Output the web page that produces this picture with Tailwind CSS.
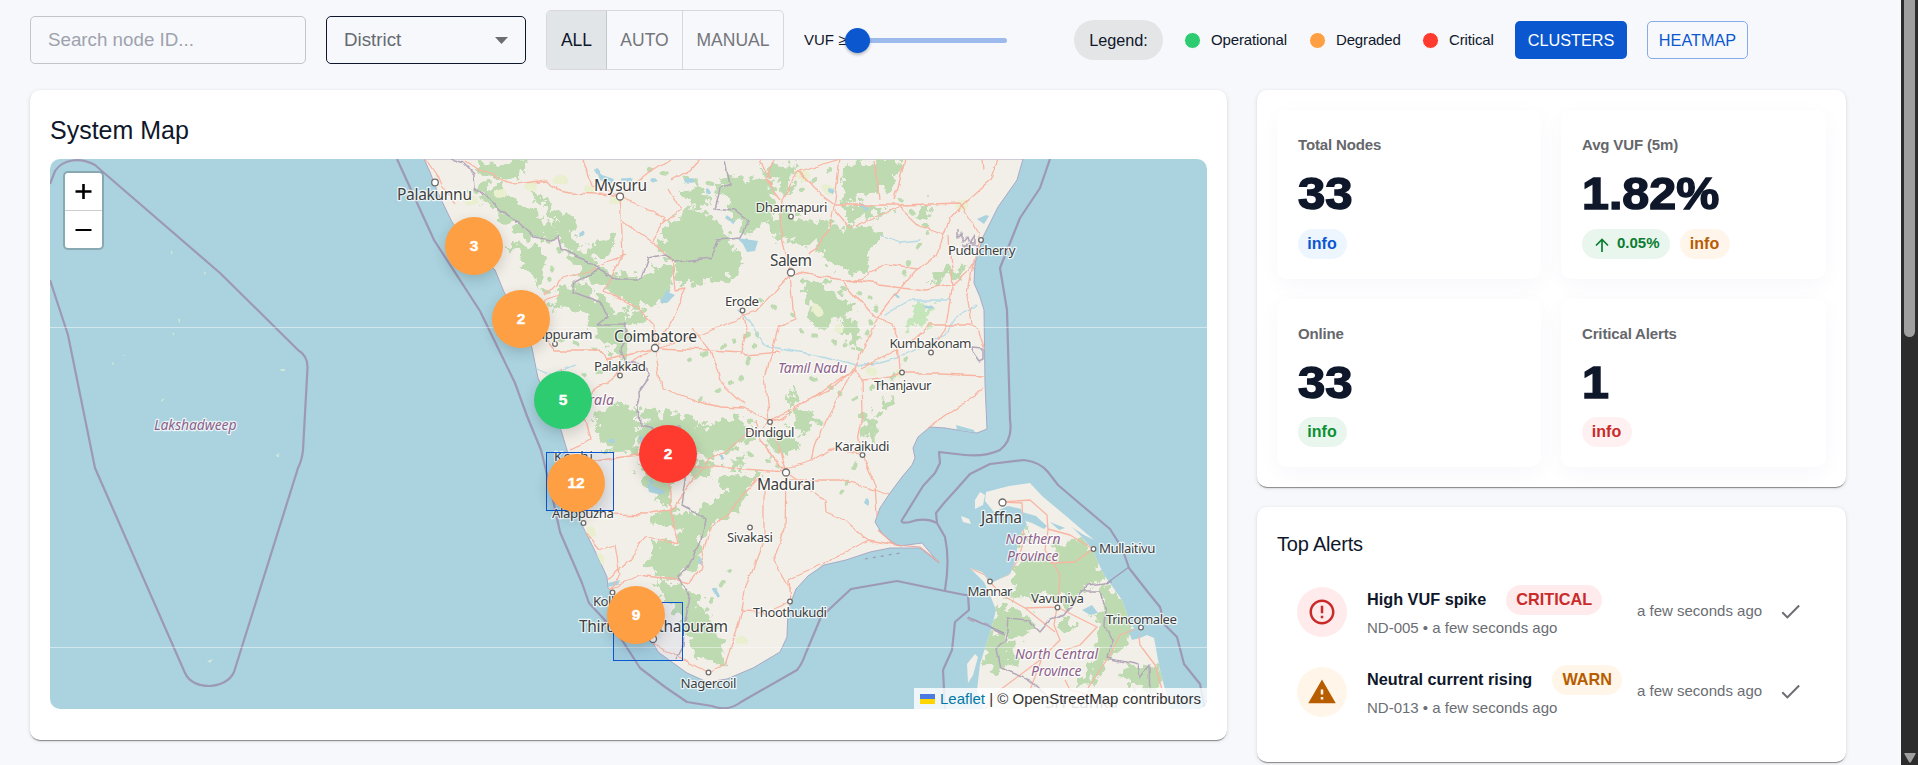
<!DOCTYPE html>
<html lang="en">
<head>
<meta charset="utf-8">
<title>System Map</title>
<script src="https://cdn.jsdelivr.net/npm/@tailwindcss/browser@4"></script>
</head>
<body class="h-[765px] w-[1918px] overflow-hidden bg-[#f7f8fc] font-['Liberation_Sans',Arial,sans-serif] text-[#0f172a]">
<div class="flex h-[765px]">
<main class="h-[765px] w-[1901px] overflow-hidden pl-[30px]">
  <!-- Toolbar -->
  <div class="flex h-20 items-center">
    <div class="flex h-12 w-[276px] items-center rounded-[5px] border border-[#c2c4c9] pl-[17px] text-[18.75px] text-[#9ea2ac]">Search node ID...</div>
    <div class="ml-5 flex h-12 w-[200px] items-center justify-between rounded-[5px] border border-[#0f172a] pr-[17px] pl-[17px] text-[18.75px] text-[#666a70]">
      <span class="pt-px">District</span>
      <svg class="h-[7px] w-[13px]" viewBox="0 0 13 7"><path d="M0 0h13L6.5 7z" fill="#6b6d71"/></svg>
    </div>
    <div class="ml-5 flex h-[60px] w-[238px] overflow-hidden rounded-[5px] border border-[#d6d8dc] text-[17.5px] text-[#74767a]">
      <div class="flex w-[60px] items-center justify-center border-r border-[#c6c8cc] bg-[#e2e5e8] text-[#0f172a]">ALL</div>
      <div class="flex w-[76px] items-center justify-center border-r border-[#d6d8dc]">AUTO</div>
      <div class="flex flex-1 items-center justify-center">MANUAL</div>
    </div>
    <div class="ml-5 flex w-[53px] items-center text-[15px] whitespace-nowrap">VUF ≥</div>
    <div class="relative h-[5px] w-[150px] rounded-full bg-[#9dbaec]">
      <div class="absolute -top-[10px] -left-[12px] size-[25px] rounded-full bg-[#0b57d0] shadow-[0_2px_3px_rgba(0,0,0,0.25)]"></div>
    </div>
    <div class="ml-[67px] flex h-10 w-[89px] items-center justify-center rounded-full bg-[#e3e5e7] text-[16.25px]">Legend:</div>
    <div class="ml-5 flex items-center text-[15px] tracking-[-0.01em]">
      <span class="mr-[10px] ml-px size-[17px] rounded-full border-[1.5px] border-white bg-[#2ecc71]"></span><span class="w-[77px]">Operational</span>
      <span class="mr-[10px] ml-[21px] size-[17px] rounded-full border-[1.5px] border-white bg-[#ff9f43]"></span><span class="w-[66px]">Degraded</span>
      <span class="mr-[10px] ml-5 size-[17px] rounded-full border-[1.5px] border-white bg-[#ff3b30]"></span><span class="w-[46px]">Critical</span>
    </div>
    <div class="ml-5 flex h-[38px] w-28 items-center justify-center rounded-[5px] bg-[#0b57d0] text-[16.25px] text-white">CLUSTERS</div>
    <div class="ml-5 flex h-[38px] w-[101px] items-center justify-center rounded-[5px] border border-[#85abe8] text-[16.25px] text-[#0b57d0]">HEATMAP</div>
  </div>

  <div class="mt-[10px] flex items-start gap-[30px]">
    <!-- Map card -->
    <section class="h-[650px] w-[1197px] rounded-[10px] bg-white px-5 shadow-[0_2px_1px_-1px_rgba(0,0,0,0.3),0_1px_1px_rgba(0,0,0,0.15),0_1px_4px_rgba(0,0,0,0.12)]">
      <h2 class="h-[69px] pt-[24px] text-[25px] leading-[32px]">System Map</h2>
      <div class="relative h-[550px] w-[1157px] overflow-hidden rounded-[10px] bg-[#aad3df]">
        <svg class="block h-[550px] w-[1157px]" viewBox="50 159 1157 550" font-family="'Noto Sans','Open Sans',sans-serif">
          <defs>
            <filter id="rough" x="-5%" y="-5%" width="110%" height="110%">
              <feTurbulence type="fractalNoise" baseFrequency="0.035" numOctaves="4" seed="7" result="n"/>
              <feDisplacementMap in="SourceGraphic" in2="n" scale="75" xChannelSelector="R" yChannelSelector="G"/>
            </filter>
            <filter id="wobble" x="-5%" y="-5%" width="110%" height="110%">
              <feTurbulence type="fractalNoise" baseFrequency="0.05" numOctaves="3" seed="3" result="n"/>
              <feDisplacementMap in="SourceGraphic" in2="n" scale="7" xChannelSelector="R" yChannelSelector="G"/>
            </filter>
            <clipPath id="mainland"><path id="coast" d="M424 159L430 172L438 193L452 222L470 246L495 270L504 292L520 320L532 348L538 378L548 400L560 427L567 450L572 477L582 525L597 555L607 577L608 588L615 595L634 618L653 643L658 652L687 673L707 682L727 679L753 668L780 652L787 637L788 610L796 589L808 576L824 565L846 560L870 552L890 548L920 548L939 563L922 543L900 546L890 541L881 532L875 522L880 508L890 493L902 477L912 465L915 458L913 448L918 437L930 427L945 428L957 430L977 433L987 429L985 383L984 310L980 297L974 283L975 263L983 237L998 207L1017 180L1023 159Z"/></clipPath>
            <clipPath id="lanka"><path id="isle" d="M1030 483L1009 486L986 492L985 501L994 512L1008 506L1021 509L1027 525L1018 537L1016 560L1010 574L991 583L982 572L970 568L984 582L990 595L996 610L991 630L986 645L980 664L977 690L984 709L1170 709L1160 670L1154 638L1147 635L1140 638L1130 622L1122 600L1112 586L1104 575L1097 560L1093 550L1080 535L1065 520L1045 505Z"/></clipPath>
          </defs>

          <!-- Land -->
          <g fill="#f2efe9" stroke="#a9a9c4" stroke-width="1"><use href="#coast"/><use href="#isle" stroke="none"/></g>
          <g fill="#f2efe9">
            <path d="M961 516l8 3 2 5-8-2zM975 500l5-8 5 3-2 10-8 4zM967 664l8-10 3 3-5 18-5 8z"/>
            <path d="M1031 484l11 12 24 20 28 24-10-5-28-18-20-15z"/>
          </g>

          <!-- Forest -->
          <g clip-path="url(#mainland)" fill="#bddab1">
            <g transform="translate(380 150) scale(.3333)"><g filter="url(#rough)">
              <path d="M280 60L420 20L450 60L370 95zM290 100L360 110L430 165L520 230L545 270L440 260L350 190L300 130zM440 105L490 135L520 180L585 190L580 270L640 330L560 310L525 230L490 165zM380 275L470 290L500 330L480 420L430 340zM590 300L700 260L690 320L630 330zM560 280L640 340L700 370L790 380L690 420L600 380zM590 395L640 420L700 480L750 520L740 620L690 600L620 520L600 470L510 480L530 420zM700 390L790 380L850 340L880 370L870 450L780 475L720 440L680 420zM870 210L940 170L1000 200L1050 270L1090 330L1070 380L900 410L880 330L830 300zM900 120L970 110L990 160L930 170zM1010 90L1100 70L1180 110L1170 210L1100 260L1050 180zM1140 50L1240 40L1250 80L1160 90zM1150 200L1250 190L1260 240L1190 270zM730 480L810 490L780 530L740 540zM640 780L760 760L780 830L720 890L660 840zM790 780L930 800L960 830L1080 800L1120 840L1070 900L780 880z"/>
            </g></g>
            <g transform="translate(780 150) scale(.3333)"><g filter="url(#rough)">
              <path d="M190 40L370 30L330 110L230 140L180 170zM190 170L260 160L340 180L200 220zM140 220L300 240L270 310L260 370L160 350L100 290L10 270L50 210zM60 380L120 390L200 450L240 470L190 500L130 530L90 520L80 440zM0 80L40 90L30 130L0 120zM180 500L240 510L230 590L190 570zM455 370L550 345L550 375L450 400zM420 160L460 160L440 220L410 200zM20 720L60 740L40 780L30 750zM30 790L100 790L110 830L60 860L30 830zM0 870L60 880L50 900L0 900zM250 790L290 800L290 880L260 860zM330 720L350 730L320 780L300 780z"/>
              <path fill="#c5e6bb" d="M400 470L465 460L440 520L390 540z"/>
            </g></g>
            <g transform="translate(500 430) scale(.3333)"><g filter="url(#rough)">
              <path d="M280 0L420 0L410 70L330 60zM410 90L520 150L500 230L440 170zM530 60L600 100L650 110L640 140L560 130zM650 140L780 130L740 180L720 250L650 270L600 320L600 400L560 430L490 450L440 400L460 340L530 330L540 290L460 290L450 260L540 240L600 240L680 190zM460 450L560 470L620 550L670 640L670 710L600 680L560 610L520 540zM700 80L740 80L740 110L700 110zM800 20L880 20L890 60L810 70zM580 20L680 20L640 90L590 80z"/>
            </g></g>
          </g>
          <g clip-path="url(#lanka)" fill="#bddab1">
            <g transform="translate(840 440) scale(.3333)"><g filter="url(#rough)">
              <path d="M520 370L650 350L740 300L770 350L790 410L740 440L700 500L640 460L590 470L510 480zM640 310L720 300L740 350L640 360zM510 260L560 260L560 310L530 300zM480 500L580 530L560 590L500 590L540 660L470 690L430 660L450 580zM790 440L830 450L890 540L870 600L800 670L750 740L700 740L760 660L780 590zM660 540L700 540L690 590L660 570zM860 670L970 680L960 760L850 730zM760 540L800 530L800 560z"/>
            </g></g>
          </g>

          <!-- Sparse woodland specks, farmland tint and water -->
          <g clip-path="url(#mainland)">
            <g filter="url(#wobble)" fill="none" stroke-linecap="round">
              <path stroke="#bddab1" stroke-width="4" stroke-dasharray="1 13 4 17 2 9" d="M470 190L560 250L545 290L640 320M650 170L740 190M690 360L760 330L740 380L700 400M800 190L830 170M800 330L860 350L880 300L820 280M800 370L850 400L890 380L905 360M860 450L850 480L835 500M900 200L930 230L900 280M730 570L700 620L720 650M690 440L740 450L790 470M560 340L600 350M540 390L600 370M760 300L800 320"/>
              <path stroke="#e9efcf" stroke-width="9" stroke-dasharray="4 26" d="M470 200L560 180L620 200M800 175L830 190M815 310L840 330M870 370L900 374M590 530L600 560M960 205L980 200M740 640L760 650"/>
              <path stroke="#aad3df" stroke-width="3.5" stroke-dasharray="3 30 7 22" d="M595 170L602 180L700 180L745 240L755 250M580 235L590 230M662 300L670 290M545 385L560 365M610 440L640 435L660 490M830 190L870 210M895 295L905 300L945 310M720 455L725 460M650 480L665 490M700 560L720 600M867 500L869 520"/>
              <path stroke="#b7dbe5" stroke-width="1.3" d="M740 310L755 330L765 345L785 350L805 353L830 358L855 365L880 362L905 355L925 345L945 335L955 318L975 305M535 368L550 375L575 365M880 235L900 242L920 240M885 315L910 300L950 300"/>
            </g>
            <path fill="#aad3df" d="M977 219l9-4 3 1-5 8zM737 238l21 3-3 10-8 1-4-8zM660 303l7-14 3 4 5 2-8 8zM647 483l18 8-3 4-13-3zM608 583l12-3-2 5-10 2zM956 425l18 5 1 3-18-3zM596 169l6 6 12 4-3 5-11-4z"/>
          </g>
          <path fill="#aad3df" d="M1022 512l14 4 11 10-3 3-12-6-9-3zM1050 522l15 6-6 2zM1082 610l10-5 6 8-8 2zM1128 630l8-2 4 10-8 2z"/>

          <!-- Roads -->
          <g clip-path="url(#mainland)" fill="none" stroke="#f8b5a2" stroke-width="1.3" stroke-linejoin="round">
            <g filter="url(#wobble)">
              <path d="M426 159L440 180L455 205M465 162L480 172L515 184L548 180L557 190L570 193L620 195L650 172L670 159M583 159L592 185L620 195L623 255L603 290L640 310L655 325L655 348L700 335L755 312L791 274L795 320L780 326L765 377L770 422L786 472L785 530L773 561L790 590M622 220L650 240L672 258L675 290L687 288L668 325L655 348L661 388L700 402L720 407L745 408L770 422M620 197L645 207L665 218L652 240M668 188L680 210L660 225M700 159L690 170L672 180M625 255L592 270L560 280L545 295M560 295L545 300L540 330L555 350L600 350L608 360L655 348M655 348L635 360L610 380L590 395L580 410M692 328L710 350L720 380L745 405M655 348L710 350L740 352L745 355L780 352M742 310L747 330L740 355M791 272L800 273L843 280L860 280L885 265L918 269L910 275L878 317L860 355L854 368L818 395L780 420L770 422M848 280L925 290L955 284L968 272L975 260M843 280L860 300L875 317L890 322L898 340L900 370M860 368L910 343L930 325L968 325L978 330L985 350M854 368L862 380L880 378L900 374L940 374L984 376M862 380L863 415L858 440L862 455L875 485L878 527L900 547M984 388L945 415L925 430M791 272L780 230L782 200L798 172L840 159L835 200L830 230L810 255M798 172L815 190L835 205L885 205L898 205L920 226L944 235L950 218L962 205L990 180L998 159M898 205L960 203L980 235L972 270L967 300L970 325M944 235L935 255L918 269M949 235L952 290L945 330L931 350M895 200L905 159M835 210L850 228L898 207M854 368L830 390L800 405L770 422L755 435M780 470L812 460L830 450L862 455M786 473L825 500L826 512L845 520L862 535L870 540M788 480L840 480L875 490L890 495M854 368L820 430L812 460M786 472L700 466L665 460L640 455L615 458L570 465M786 472L760 440L755 420M760 476L730 510L710 530L700 570L690 583L678 580L640 575L605 590M765 480L765 540L745 590L742 612L725 665L708 672M607 514L645 515L672 510L675 530L678 544L660 540L645 535L630 560L608 580M572 450L590 440L585 420L570 400L560 370M583 530L600 550L615 545L620 575L608 592M653 643L665 652L690 661L708 672M742 612L765 613L790 602L788 580L797 575L820 565M672 510L690 485L705 462L740 440L753 430M650 455L672 490L672 510M900 546L870 540L840 553L820 568M983 159L984 170M875 159L880 200M780 200L765 180L774 159M760 159L770 180"/>
            </g>
          </g>
          <g clip-path="url(#lanka)" fill="none" stroke="#f8b5a2" stroke-width="1.3" stroke-linejoin="round">
            <path d="M1002 502L1022 503L1024 540L1018 560L1008 575L990 582M1002 502L1030 500L1047 515L1048 530L1045 550L1053 563L1060 575L1059 592L1057 607L1054 625L1060 640L1040 660L1020 675L1000 690L985 709M970 568L985 575L990 582L1002 595L1025 608L1057 607L1075 616L1097 627L1080 645L1065 650M1048 529L1070 535L1093 549L1075 562L1050 563M1141 627L1120 635L1110 655L1088 688M1138 630L1140 645L1155 665L1165 700M1025 608L1055 632M1045 650L1030 690M1065 680L1070 690L1090 695"/>
          </g>
          <path d="M878 530L895 545L920 547L939 562" fill="none" stroke="#e9a99f" stroke-width="1.2"/>

          <!-- State borders -->
          <g fill="none" stroke="#b3a6b8" stroke-width="1.5" stroke-linejoin="round" filter="url(#wobble)">
            <path d="M451 159L463 163L474 174L475 187L500 210L520 223L535 237L550 240L558 237L561 249L575 256L590 262L598 270L615 279L641 279L648 258L667 254L675 262L710 258L717 240L740 238L748 220L735 210L715 208L720 190L731 185L726 160M598 270L575 282L573 292L600 302L609 315L597 325L625 325L628 333L620 352L625 362L642 364L650 375L638 392L640 425L660 430L680 425L688 440L686 480L682 505L695 512L705 520L700 545L690 565L678 577L690 597L685 620L683 645L675 660"/>
            <path d="M958 230v8l4-4v8l5-6 2 7 5-8v8h-8l-4 8 6-2M962 245h14v8M973 348l10 1v10l-4 2-7-10z"/>
            <path d="M1112 582L1090 585L1080 595L1065 615L1050 620L1040 632L1028 620L1008 618L1006 640L997 650L1001 668L1030 680L1050 700M1080 592L1100 592L1105 610L1104 625L1112 640L1107 658L1138 665L1140 678L1150 665L1151 700M968 617L1004 633"/>
          </g>

          <!-- Maritime borders -->
          <g fill="none" stroke="#9d98b5" stroke-width="2.2" stroke-linejoin="round">
            <path d="M50 184L55 171C63 159 80 157 95 165L103 172L220 273L298 350Q308 356 307.500 368L303 450Q302 460 298 468L234 672C226 690 193 691 185 673L95 468L68 335L50 280"/>
            <path d="M397 159L434 240L480 311L515 383L527 416L541 450L552 495L560 532L582 583L589 603L602 617L622 640L640 668L665 687L687 702L712 706Q728 712 741 702L797 670Q802 664 805 655L821 617L851 589L897 581L945 591L965 595L968 595"/>
            <path d="M1050 159L1040 188L1020 218L1000 268L1007 310L1010 420Q1013 440 1000 450Q985 457 965 455L939 452L940 463L935 473L923 486L902 520Q900 524 910 522Q925 517 937 523L945 537Q950 560 945 590"/>
            <path d="M937 523L936 513L944 503L954 492L970 474L990 464L1024 460Q1040 462 1048 472L1058 485L1085 508L1110 529L1122 548L1129 568L1147 591L1160 607L1165 625L1177 637L1184 664L1200 684L1205 709M968 595L969 610L955 622L952 650L943 670L945 709"/>
            <path stroke-width="1.200" d="M968 617L1004 633M1107 583L1129 567"/>
            <path stroke-width="1.200" stroke-dasharray="3 5" d="M865 559L900 553"/>
          </g>
          <!-- Atolls -->
          <g fill="#cfe6da"><path d="M171 250l2 3-2 1zM203 271l3 2-1 2zM178 320l2-2v5zM172 333h2v3zM112 362l2 1-1 3zM280 369h5v2h-4zM161 400l4-2-3 4zM276 455l3-2v4h-2zM207 661l6-2-3 4zM122 355h3v1z"/></g>

          <!-- Tile seams -->
          <g stroke="#fff" stroke-opacity=".45" stroke-width="1"><path d="M50 327.500H1207"/><path d="M50 647.500H1207"/></g>

          <!-- Town dots -->
          <g fill="#fff" stroke="#6f6d6b" stroke-width="1.300">
            <g><circle cx="435" cy="182.500" r="3.300"/><circle cx="620" cy="196.500" r="3.500"/><circle cx="791" cy="272.500" r="3.500"/><circle cx="655" cy="348" r="3.500"/><circle cx="786" cy="472.500" r="3.500"/><circle cx="653" cy="639" r="3.500"/><circle cx="1002.500" cy="502.500" r="3.500"/></g>
            <g><circle cx="791" cy="216.500" r="2.300"/><circle cx="742.500" cy="310.500" r="2.300"/><circle cx="555" cy="344" r="2.300"/><circle cx="620" cy="375.500" r="2.300"/><circle cx="981" cy="240" r="2.300"/><circle cx="931" cy="352.500" r="2.300"/><circle cx="902" cy="372.500" r="2.300"/><circle cx="770" cy="422" r="2.300"/><circle cx="862.500" cy="455" r="2.300"/><circle cx="583.500" cy="523" r="2.300"/><circle cx="750" cy="527.500" r="2.300"/><circle cx="612.500" cy="592.500" r="2.300"/><circle cx="790" cy="601.500" r="2.300"/><circle cx="708.500" cy="672.500" r="2.300"/><circle cx="1093.500" cy="549" r="2.300"/><circle cx="990" cy="581.500" r="2.300"/><circle cx="1057.500" cy="607.500" r="2.300"/><circle cx="1141" cy="627.500" r="2.300"/></g>
          </g>

          <!-- Place names -->
          <g fill="#404040" stroke="#fff" stroke-opacity=".75" stroke-width="2.500" stroke-linejoin="round" paint-order="stroke">
            <g font-size="15.500">
              <text x="397" y="200" textLength="75">Palakunnu</text>
              <text x="594" y="190.500" textLength="53">Mysuru</text>
              <text x="770" y="265.500" textLength="42">Salem</text>
              <text x="614" y="342" textLength="83">Coimbatore</text>
              <text x="757" y="490" textLength="58">Madurai</text>
              <text x="579" y="632" textLength="149">Thiruvananthapuram</text>
              <text x="981" y="522.500" textLength="41">Jaffna</text>
            </g>
            <g font-size="13.300">
              <text x="755.500" y="212" textLength="72">Dharmapuri</text>
              <text x="725" y="305.500" textLength="34">Erode</text>
              <text x="516" y="339" textLength="76.500">Malappuram</text>
              <text x="594" y="371" textLength="52">Palakkad</text>
              <text x="948" y="254.500" textLength="67.500">Puducherry</text>
              <text x="889.500" y="348" textLength="82">Kumbakonam</text>
              <text x="874" y="390" textLength="57.500">Thanjavur</text>
              <text x="745" y="436.500" textLength="49.500">Dindigul</text>
              <text x="834.500" y="450.500" textLength="55">Karaikudi</text>
              <text x="554" y="460.500" textLength="39">Kochi</text>
              <text x="552" y="517.500" textLength="62">Alappuzha</text>
              <text x="727" y="542" textLength="46">Sivakasi</text>
              <text x="593" y="606" textLength="40">Kollam</text>
              <text x="753" y="617" textLength="74">Thoothukudi</text>
              <text x="680.500" y="688" textLength="56">Nagercoil</text>
              <text x="1099" y="553" textLength="56.500">Mullaitivu</text>
              <text x="967.500" y="596" textLength="45">Mannar</text>
              <text x="1031" y="602.500" textLength="53">Vavuniya</text>
              <text x="1106" y="623.500" textLength="71">Trincomalee</text>
            </g>
            <g font-size="14" font-style="italic" fill="#8d618b">
              <text x="573" y="405" textLength="41">Kerala</text>
              <text x="778" y="373" textLength="69">Tamil Nadu</text>
              <text x="154" y="429.500" textLength="82.500">Lakshadweep</text>
              <text x="1005.500" y="543.500" textLength="55">Northern</text>
              <text x="1007" y="560.500" textLength="51.500">Province</text>
              <text x="1015" y="659" textLength="83">North Central</text>
              <text x="1031" y="675.500" textLength="50.500">Province</text>
            </g>
            <text x="1045" y="708" font-size="17" fill="#777" textLength="73">Sri Lanka</text>
          </g>
        </svg>

        <!-- Cluster bounds -->
        <div class="absolute top-[293px] left-[496px] h-[59px] w-[68px] border border-[#0b57d0] bg-[#0b57d0]/5"></div>
        <div class="absolute top-[443px] left-[563px] h-[59px] w-[70px] border border-[#0b57d0] bg-[#0b57d0]/5"></div>

        <!-- Clusters -->
        <div class="absolute top-[58px] left-[395px] flex size-[58px] items-center justify-center rounded-full bg-[#ff9f43] text-[15.5px] font-bold text-white shadow-[0_5px_14px_rgba(0,0,0,0.16)] [-webkit-text-stroke:0.4px_white]">3</div>
        <div class="absolute top-[131px] left-[442px] flex size-[58px] items-center justify-center rounded-full bg-[#ff9f43] text-[15.5px] font-bold text-white shadow-[0_5px_14px_rgba(0,0,0,0.16)] [-webkit-text-stroke:0.4px_white]">2</div>
        <div class="absolute top-[212px] left-[484px] flex size-[58px] items-center justify-center rounded-full bg-[#2ecc71] text-[15.5px] font-bold text-white shadow-[0_5px_14px_rgba(0,0,0,0.16)] [-webkit-text-stroke:0.4px_white]">5</div>
        <div class="absolute top-[266px] left-[589px] flex size-[58px] items-center justify-center rounded-full bg-[#ff3b30] text-[15.5px] font-bold text-white shadow-[0_5px_14px_rgba(0,0,0,0.16)] [-webkit-text-stroke:0.4px_white]">2</div>
        <div class="absolute top-[295px] left-[497px] flex size-[58px] items-center justify-center rounded-full bg-[#ff9f43] text-[15.5px] font-bold text-white shadow-[0_5px_14px_rgba(0,0,0,0.16)] [-webkit-text-stroke:0.4px_white]">12</div>
        <div class="absolute top-[427px] left-[557px] flex size-[58px] items-center justify-center rounded-full bg-[#ff9f43] text-[15.5px] font-bold text-white shadow-[0_5px_14px_rgba(0,0,0,0.16)] [-webkit-text-stroke:0.4px_white]">9</div>

        <!-- Zoom control -->
        <div class="absolute top-[12px] left-[13px] w-[41px] rounded-[5px] border-2 border-black/20 bg-white bg-clip-padding">
          <div class="flex h-[38px] items-center justify-center border-b border-[#ccc]"><svg class="h-[17px] w-[17px]" viewBox="0 0 17 17"><path d="M8.500 1v15M.5 8.500h16" stroke="#000" stroke-width="2.600"/></svg></div>
          <div class="flex h-[37px] items-center justify-center"><svg class="h-[17px] w-[17px]" viewBox="0 0 17 17"><path d="M.5 9h16" stroke="#000" stroke-width="2"/></svg></div>
        </div>

        <!-- Attribution -->
        <div class="absolute right-0 bottom-0 flex h-[21px] w-[293px] items-center bg-white/80 pt-px pl-[6px] text-[15px] whitespace-nowrap text-[#333]">
          <svg class="mr-[5px] h-[10px] w-[15px]" viewBox="0 0 15 10"><path fill="#4c7be1" d="M0 0h15v5H0z"/><path fill="#ffd500" d="M0 5h15v5H0z"/></svg>
          <span><span class="text-[#0078a8]">Leaflet</span> | © OpenStreetMap contributors</span>
        </div>
      </div>
    </section>

    <div class="flex w-[589px] flex-col gap-5">
      <!-- KPI cards -->
      <section class="grid h-[397px] grid-cols-[264px_265px] grid-rows-[169px_168px] content-start gap-5 rounded-[10px] bg-white p-5 shadow-[0_2px_1px_-1px_rgba(0,0,0,0.3),0_1px_1px_rgba(0,0,0,0.15),0_1px_4px_rgba(0,0,0,0.12)]">
        <div class="rounded-[10px] bg-white px-[21px] pt-[26px] shadow-[0_6px_24px_rgba(20,40,160,0.035)]">
          <div class="text-[15px] leading-[18px] font-bold tracking-[-0.01em] text-[#65676b]">Total Nodes</div>
          <div class="mt-[14px] h-[51px] w-fit origin-left scale-x-[1.09] text-[45px] leading-[52px] font-bold [-webkit-text-stroke:1.5px_#0f172a]">33</div>
          <div class="mt-[10px] flex h-[30px] w-[49px] items-center justify-center rounded-full bg-[#edf5ff] pr-px text-[16px] font-bold text-[#0b57d0]">info</div>
        </div>
        <div class="rounded-[10px] bg-white px-[21px] pt-[26px] shadow-[0_6px_24px_rgba(20,40,160,0.035)]">
          <div class="text-[15px] leading-[18px] font-bold tracking-[-0.01em] text-[#65676b]">Avg VUF (5m)</div>
          <div class="mt-[14px] h-[51px] w-fit origin-left scale-x-[1.075] text-[45px] leading-[52px] font-bold [-webkit-text-stroke:1.5px_#0f172a]">1.82%</div>
          <div class="mt-[10px] flex gap-[10px]">
            <div class="flex h-[30px] w-[88px] items-center rounded-full bg-[#e9f6ed] pb-px pl-[13px] text-[15px] font-bold text-[#0a7d32]">
              <svg class="mt-[2px] mr-[8px] h-[14px] w-[14px]" viewBox="0 0 14 14" fill="none" stroke="#0a7d32" stroke-width="1.700"><path d="M7 14V1.500M1 7.500L7 1.500L13 7.500"/></svg>0.05%</div>
            <div class="flex h-[30px] w-[50px] items-center justify-center rounded-full bg-[#fff5eb] pr-px text-[16px] font-bold text-[#b85c00]">info</div>
          </div>
        </div>
        <div class="rounded-[10px] bg-white px-[21px] pt-[26px] shadow-[0_6px_24px_rgba(20,40,160,0.035)]">
          <div class="text-[15px] leading-[18px] font-bold tracking-[-0.01em] text-[#65676b]">Online</div>
          <div class="mt-[14px] h-[51px] w-fit origin-left scale-x-[1.09] text-[45px] leading-[52px] font-bold [-webkit-text-stroke:1.5px_#0f172a]">33</div>
          <div class="mt-[9px] flex h-[30px] w-[49px] items-center justify-center rounded-full bg-[#e9f6ed] pr-px text-[16px] font-bold text-[#0a8f32]">info</div>
        </div>
        <div class="rounded-[10px] bg-white px-[21px] pt-[26px] shadow-[0_6px_24px_rgba(20,40,160,0.035)]">
          <div class="text-[15px] leading-[18px] font-bold tracking-[-0.01em] text-[#65676b]">Critical Alerts</div>
          <div class="mt-[14px] h-[51px] w-fit origin-left scale-x-[1.075] text-[45px] leading-[52px] font-bold [-webkit-text-stroke:1.5px_#0f172a]">1</div>
          <div class="mt-[9px] flex h-[30px] w-[50px] items-center justify-center rounded-full bg-[#fff1f1] pr-px text-[16px] font-bold text-[#c92a2a]">info</div>
        </div>
      </section>

      <!-- Alerts -->
      <section class="h-[255px] rounded-[10px] bg-white px-5 pt-[23px] shadow-[0_2px_1px_-1px_rgba(0,0,0,0.3),0_1px_1px_rgba(0,0,0,0.15),0_1px_4px_rgba(0,0,0,0.12)]">
        <h2 class="h-[47px] text-[20px] leading-[28px] tracking-[-0.01em]">Top Alerts</h2>
        <div class="flex h-20 items-start pl-5">
          <div class="mt-[10px] flex size-[50px] items-center justify-center rounded-full bg-[#ffebec]"><svg class="size-[30px]" viewBox="0 0 24 24" fill="#c92a2a"><path d="M11 15h2v2h-2zm0-8h2v6h-2zm.99-5C6.470 2 2 6.480 2 12s4.470 10 9.990 10C17.520 22 22 17.520 22 12S17.520 2 11.990 2M12 20c-4.420 0-8-3.580-8-8s3.580-8 8-8 8 3.580 8 8-3.580 8-8 8"/></svg></div>
          <div class="ml-5 w-[270px] pt-2">
            <div class="flex h-[30px] items-center gap-5 text-[16.25px] font-bold whitespace-nowrap"><span class="pb-[2px]">High VUF spike</span><span class="flex h-[30px] w-[96px] items-center justify-center rounded-full bg-[#ffebec] pb-[2px] text-[#c92a2a]">CRITICAL</span></div>
            <div class="mt-[3px] text-[15px] leading-[20px] whitespace-nowrap text-[#6b6e73]">ND-005 • a few seconds ago</div>
          </div>
          <div class="mt-[24px] w-[126px] text-[15px] leading-[20px] whitespace-nowrap text-[#6b6e73]">a few seconds ago</div>
          <svg class="mt-[22px] ml-[15px] size-[25px]" viewBox="0 0 24 24" fill="#6b6e73"><path d="M9 16.200L4.800 12l-1.400 1.400L9 19 21 7l-1.400-1.400z"/></svg>
        </div>
        <div class="flex h-20 items-start pl-5">
          <div class="mt-[10px] flex size-[50px] items-center justify-center rounded-full bg-[#fff6e9]"><svg class="size-[30px]" viewBox="0 0 24 24" fill="#b85c00"><path d="M1 21h22L12 2zm12-3h-2v-2h2zm0-4h-2v-4h2z"/></svg></div>
          <div class="ml-5 w-[270px] pt-2">
            <div class="flex h-[30px] items-center gap-5 text-[16.25px] font-bold whitespace-nowrap"><span class="pb-[2px]">Neutral current rising</span><span class="flex h-[30px] w-[70px] items-center justify-center rounded-full bg-[#fff6e9] pb-[2px] text-[#b85c00]">WARN</span></div>
            <div class="mt-[3px] text-[15px] leading-[20px] whitespace-nowrap text-[#6b6e73]">ND-013 • a few seconds ago</div>
          </div>
          <div class="mt-[24px] w-[126px] text-[15px] leading-[20px] whitespace-nowrap text-[#6b6e73]">a few seconds ago</div>
          <svg class="mt-[22px] ml-[15px] size-[25px]" viewBox="0 0 24 24" fill="#6b6e73"><path d="M9 16.200L4.800 12l-1.400 1.400L9 19 21 7l-1.400-1.400z"/></svg>
        </div>
      </section>
    </div>
  </div>
</main>
<!-- Scrollbar -->
<aside class="flex h-[765px] w-[17px] flex-col items-center justify-between bg-[#2c2c2c] pb-[2px]">
  <div class="h-[337px] w-[11px] rounded-b-full bg-[#9f9f9f]"></div>
  <svg class="h-[10px] w-[12px]" viewBox="0 0 12 10"><path d="M1 0h10q1 0 .6 1L7 9q-1 1.500-2 0L.4 1Q0 0 1 0z" fill="#9f9f9f"/></svg>
</aside>
</div>
</body>
</html>
